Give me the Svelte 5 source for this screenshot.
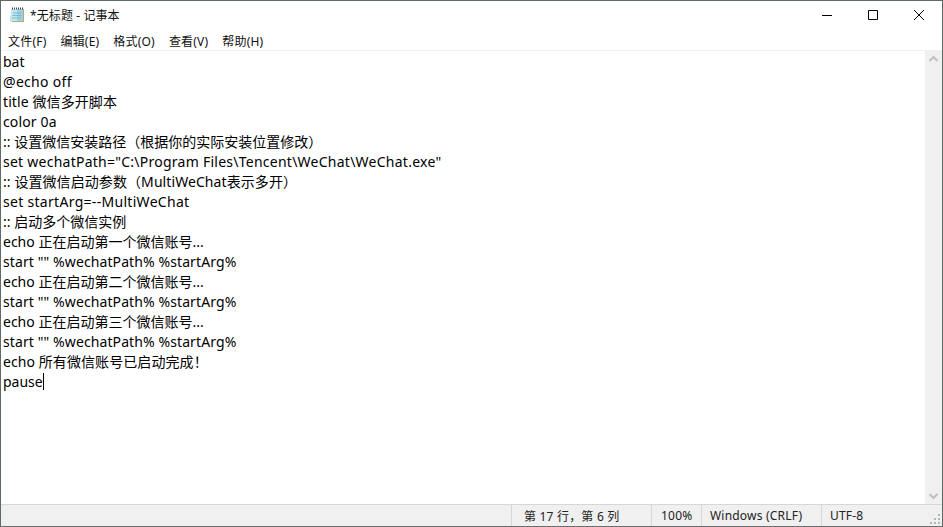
<script>
	// spacing: small per-line tweak so the latin runs reach the same width as the reference
	const lines = [
		{ text: 'bat' },
		{ text: '@echo off', spacing: 0.3 },
		{ text: 'title 微信多开脚本', spacing: 0.1 },
		{ text: 'color 0a', spacing: 0.15 },
		{ text: ':: 设置微信安装路径（根据你的实际安装位置修改）' },
		{ text: 'set wechatPath="C:\\Program Files\\Tencent\\WeChat\\WeChat.exe"', spacing: 0.25 },
		{ text: ':: 设置微信启动参数（MultiWeChat表示多开）', spacing: 0.08 },
		{ text: 'set startArg=--MultiWeChat', spacing: 0.3 },
		{ text: ':: 启动多个微信实例' },
		{ text: 'echo 正在启动第一个微信账号...' },
		{ text: 'start "" %wechatPath% %startArg%', spacing: 0.1 },
		{ text: 'echo 正在启动第二个微信账号...' },
		{ text: 'start "" %wechatPath% %startArg%', spacing: 0.1 },
		{ text: 'echo 正在启动第三个微信账号...' },
		{ text: 'start "" %wechatPath% %startArg%', spacing: 0.1 },
		{ text: 'echo 所有微信账号已启动完成！', spacing: 0.08 }
	];
	const menus = ['文件(F)', '编辑(E)', '格式(O)', '查看(V)', '帮助(H)'];
</script>

<div class="window">
	<header class="titlebar">
		<svg class="app-icon" width="16" height="16" viewBox="0 0 16 16">
			<path d="M3 2h12v13H3z" fill="#b9a77c" />
			<path d="M2.5 2h11.5v12H3.500L1 15z" fill="#9fd3e6" />
			<path d="M2.500 2H8v12H3.500L1 15z" fill="#c3e6f1" />
			<path d="M3.500 .5v2M5.500 .5v2M7.500 .5v2M9.500 .5v2M11.500 .5v2M13.500 .5v2" stroke="#444" stroke-width="1" />
			<path d="M4 6h8.500M3.500 8.500h9M3 11h9.500" stroke="#7fb5cc" stroke-width="1" />
		</svg>
		<span class="title">*无标题 - 记事本</span>
		<div class="controls">
			<button aria-label="最小化">
				<svg width="10" height="10" viewBox="0 0 10 10"><path d="M0 5.500h10" stroke="#000" /></svg>
			</button>
			<button aria-label="最大化">
				<svg width="10" height="10" viewBox="0 0 10 10"><path d="M.5.5h9v9h-9z" stroke="#000" fill="none" /></svg>
			</button>
			<button aria-label="关闭">
				<svg width="10" height="10" viewBox="0 0 10 10"><path d="M0 0l10 10M10 0L0 10" stroke="#000" /></svg>
			</button>
		</div>
	</header>

	<nav class="menubar">
		{#each menus as menu}
			<span>{menu}</span>
		{/each}
	</nav>

	<div class="body">
		<div class="editor">
			{#each lines as line}
				<div class="line" style="letter-spacing: {line.spacing ?? 0}px">{line.text}</div>
			{/each}
			<div class="line">pause<i class="caret"></i></div>
		</div>
		<div class="scrollbar">
			<svg width="17" height="17" viewBox="0 0 17 17"><path d="M4.500 10L8.500 6l4 4" fill="none" stroke="#c0c0c0" stroke-width="2" /></svg>
			<svg width="17" height="17" viewBox="0 0 17 17"><path d="M4.500 7l4 4 4-4" fill="none" stroke="#c0c0c0" stroke-width="2" /></svg>
		</div>
	</div>

	<footer class="statusbar">
		<div class="cell pos">第 17 行，第 6 列</div>
		<div class="cell zoom">100%</div>
		<div class="cell eol">Windows (CRLF)</div>
		<div class="cell enc">UTF-8</div>
		<svg class="grip" width="12" height="12" viewBox="0 0 12 12" fill="#b5b5b5">
			<rect x="9" y="1" width="2" height="2" />
			<rect x="5" y="5" width="2" height="2" />
			<rect x="9" y="5" width="2" height="2" />
			<rect x="1" y="9" width="2" height="2" />
			<rect x="5" y="9" width="2" height="2" />
			<rect x="9" y="9" width="2" height="2" />
		</svg>
	</footer>
</div>

<style>
	:global(body) {
		margin: 0;
		background: #fff;
	}

	.window {
		width: 943px;
		height: 527px;
		box-sizing: border-box;
		display: flex;
		flex-direction: column;
		border: 1px solid #5f6b6b;
		border-bottom-color: #6d6d6d;
		background: #fff;
		overflow: hidden;
		font-family: 'Noto Sans', 'Noto Sans CJK SC', sans-serif;
		color: #000;
	}

	.titlebar {
		height: 28px;
		margin-bottom: 2px;
		flex: none;
		display: flex;
		align-items: center;
		padding-left: 8px;
	}

	.app-icon {
		flex: none;
	}

	.title {
		margin-left: 5px;
		font-size: 12px;
		letter-spacing: 0.1px;
		color: #111;
	}

	.controls {
		margin-left: auto;
		display: flex;
	}

	.controls button {
		width: 46px;
		height: 28px;
		padding: 0;
		border: none;
		background: transparent;
		display: flex;
		align-items: center;
		justify-content: center;
	}

	.menubar {
		height: 19px;
		flex: none;
		display: flex;
		align-items: center;
		gap: 14px;
		padding-left: 7px;
		font-size: 12px;
		letter-spacing: 0.2px;
		color: #111;
	}

	.body {
		flex: 1;
		min-height: 0;
		display: flex;
		border-top: 1px solid #f0f0f0;
	}

	.editor {
		flex: 1;
		padding: 1px 0 0 2px;
		font-size: 14px;
		color: #000;
	}

	.line {
		height: 20px;
		line-height: 20px;
		white-space: pre;
	}

	.caret {
		display: inline-block;
		width: 1px;
		height: 17px;
		background: #000;
		vertical-align: -3px;
	}

	.scrollbar {
		width: 17px;
		flex: none;
		display: flex;
		flex-direction: column;
		justify-content: space-between;
		background: #f0f0f0;
	}

	.statusbar {
		height: 22px;
		box-sizing: border-box;
		flex: none;
		display: flex;
		align-items: center;
		position: relative;
		background: #f0f0f0;
		border-top: 1px solid #d7d7d7;
		font-size: 12px;
		letter-spacing: 0.2px;
		color: #222;
	}

	.cell {
		height: 100%;
		box-sizing: border-box;
		display: flex;
		align-items: center;
		padding-left: 12px;
		border-left: 1px solid #d7d7d7;
	}

	.pos {
		margin-left: 510px;
		width: 140px;
	}

	.zoom {
		width: 50px;
		padding-left: 9px;
	}

	.eol {
		width: 120px;
		padding-left: 8px;
	}

	.enc {
		padding-left: 8px;
	}

	.grip {
		position: absolute;
		right: 1px;
		bottom: 1px;
	}
</style>
